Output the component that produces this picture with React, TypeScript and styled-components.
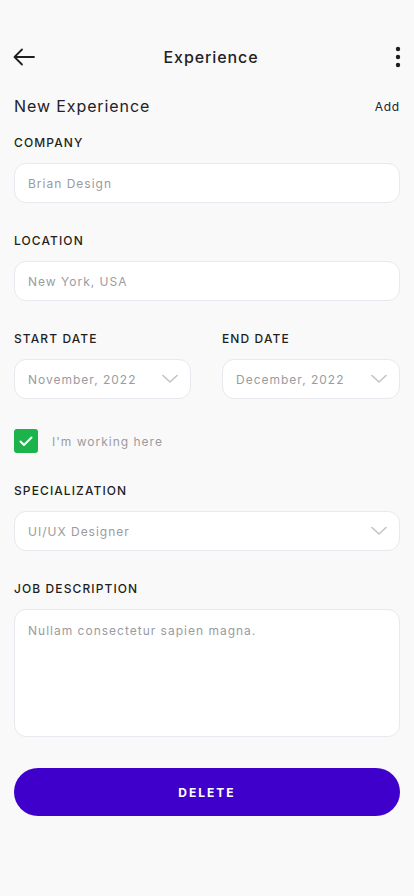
import * as React from 'react';
import styled, { createGlobalStyle } from 'styled-components';

const GlobalStyle = createGlobalStyle`
  html, body {
    margin: 0;
    padding: 0;
    background: #f9f9fa;
  }
  body {
    font-family: Inter, "Noto Sans", sans-serif;
    color: #1f1f22;
  }
`;

const Screen = styled.div`
  width: 414px;
  min-height: 896px;
  box-sizing: border-box;
  background: #f9f9fa;
  padding: 0 14px;
`;

const TopBar = styled.div`
  display: flex;
  align-items: center;
  justify-content: space-between;
  height: 44px;
  margin-top: 35px;
`;

const IconButton = styled.button<{ edge?: 'left' | 'right' }>`
  width: 24px;
  height: 24px;
  padding: 0;
  border: none;
  background: none;
  display: flex;
  align-items: center;
  justify-content: center;
  cursor: pointer;
  margin-left: ${(p) => (p.edge === 'left' ? '-2px' : '0')};
  margin-right: ${(p) => (p.edge === 'right' ? '-10px' : '0')};
`;

const Title = styled.h1`
  margin: 0;
  font-size: 16px;
  font-weight: 500;
  letter-spacing: 0.9px;
  color: #222226;
`;

const SectionHead = styled.div`
  display: flex;
  align-items: center;
  justify-content: space-between;
  margin-top: 13px;
  height: 28px;
`;

const SectionTitle = styled.h2`
  margin: 0;
  font-size: 16px;
  font-weight: 400;
  letter-spacing: 0.9px;
  color: #222226;
`;

const TextLink = styled.span`
  font-size: 12px;
  letter-spacing: 0.8px;
  color: #222226;
`;

const Form = styled.div`
  display: flex;
  flex-direction: column;
  gap: 31px;
  margin-top: 16px;
`;

const Field = styled.div`
  display: flex;
  flex-direction: column;
  gap: 13px;
  min-width: 0;
`;

const Label = styled.label`
  font-size: 12px;
  font-weight: 500;
  line-height: 14px;
  letter-spacing: 1.1px;
  color: #1f1f22;
`;

const Box = styled.div<{ tall?: boolean }>`
  height: ${(p) => (p.tall ? '128px' : '40px')};
  box-sizing: border-box;
  background: #ffffff;
  border: 1px solid #e8e8ee;
  border-radius: 12px;
  padding: ${(p) => (p.tall ? '13px 13px' : '0 12px 0 13px')};
  display: flex;
  align-items: ${(p) => (p.tall ? 'flex-start' : 'center')};
  justify-content: space-between;
`;

const Value = styled.span`
  font-size: 12px;
  letter-spacing: 1px;
  color: #9b9b9f;
  white-space: nowrap;
  overflow: hidden;
`;

const Row = styled.div`
  display: grid;
  grid-template-columns: 177px 178px;
  justify-content: space-between;
`;

const CheckRow = styled.div`
  display: flex;
  align-items: center;
  gap: 14px;
  height: 24px;
  margin-top: -1px;
`;

const CheckBox = styled.span`
  width: 24px;
  height: 24px;
  border-radius: 3px;
  background: #1cb34c;
  display: flex;
  align-items: center;
  justify-content: center;
`;

const DeleteButton = styled.button`
  height: 48px;
  width: 100%;
  border: none;
  border-radius: 24px;
  background: #3f00cb;
  color: #ffffff;
  font-family: Inter, "Noto Sans", sans-serif;
  font-size: 12px;
  font-weight: 700;
  letter-spacing: 2px;
  cursor: pointer;
`;

const Chevron = () => (
  <svg width="16" height="10" viewBox="0 0 16 10" fill="none">
    <path d="M1 1.5 L8 8 L15 1.5" stroke="#c3c3c8" strokeWidth="1.6" strokeLinecap="round" strokeLinejoin="round" />
  </svg>
);

const Select = ({ value }: { value: string }) => (
  <Box>
    <Value>{value}</Value>
    <Chevron />
  </Box>
);

class App extends React.Component {
  public render() {
    return (
      <Screen>
        <GlobalStyle />
        <TopBar>
          <IconButton edge="left" aria-label="back">
            <svg width="24" height="24" viewBox="0 0 24 24" fill="none">
              <path d="M22 12 H3 M10 4.5 L2.5 12 L10 19.5" stroke="#1f1f22" strokeWidth="1.8" strokeLinecap="round" strokeLinejoin="round" />
            </svg>
          </IconButton>
          <Title>Experience</Title>
          <IconButton edge="right" aria-label="more">
            <svg width="6" height="22" viewBox="0 0 6 22">
              <circle cx="3" cy="3" r="2.2" fill="#1f1f22" />
              <circle cx="3" cy="11" r="2.2" fill="#1f1f22" />
              <circle cx="3" cy="19" r="2.2" fill="#1f1f22" />
            </svg>
          </IconButton>
        </TopBar>

        <SectionHead>
          <SectionTitle>New Experience</SectionTitle>
          <TextLink>Add</TextLink>
        </SectionHead>

        <Form>
          <Field>
            <Label>COMPANY</Label>
            <Box>
              <Value>Brian Design</Value>
            </Box>
          </Field>
          <Field>
            <Label>LOCATION</Label>
            <Box>
              <Value>New York, USA</Value>
            </Box>
          </Field>
          <Row>
            <Field>
              <Label>START DATE</Label>
              <Select value="November, 2022" />
            </Field>
            <Field>
              <Label>END DATE</Label>
              <Select value="December, 2022" />
            </Field>
          </Row>
          <CheckRow>
            <CheckBox>
              <svg width="14" height="11" viewBox="0 0 14 11" fill="none">
                <path d="M1.5 5.5 L5 9 L12.5 1.5" stroke="#ffffff" strokeWidth="2" strokeLinecap="round" strokeLinejoin="round" />
              </svg>
            </CheckBox>
            <Value>I'm working here</Value>
          </CheckRow>
          <Field>
            <Label>SPECIALIZATION</Label>
            <Select value="UI/UX Designer" />
          </Field>
          <Field>
            <Label>JOB DESCRIPTION</Label>
            <Box tall>
              <Value>Nullam consectetur sapien magna.</Value>
            </Box>
          </Field>
          <DeleteButton>DELETE</DeleteButton>
        </Form>
      </Screen>
    );
  }
}

export default App;
